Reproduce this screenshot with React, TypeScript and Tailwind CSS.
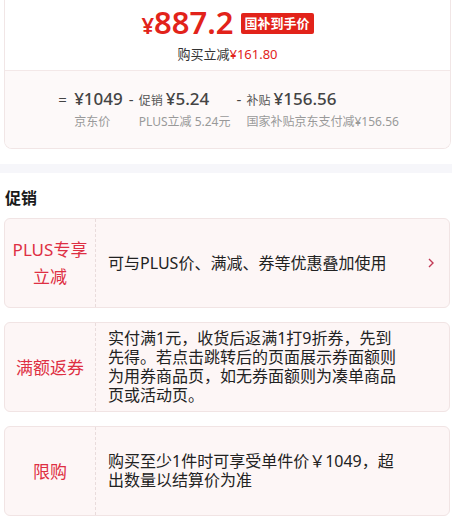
const font = "font-['Noto_Sans','Noto_Sans_CJK_SC',sans-serif]";

interface Promo {
  label: string[];
  text: string;
  arrow?: boolean;
}

const promos: Promo[] = [
  { label: ["PLUS专享", "立减"], text: "可与PLUS价、满减、券等优惠叠加使用", arrow: true },
  {
    label: ["满额返券"],
    text: "实付满1元，收货后返满1打9折券，先到先得。若点击跳转后的页面展示券面额则为用券商品页，如无券面额则为凑单商品页或活动页。",
  },
  { label: ["限购"], text: "购买至少1件时可享受单件价￥1049，超出数量以结算价为准" },
];

function Chevron() {
  return (
    <svg width="8" height="12" viewBox="0 0 8 12" className="shrink-0">
      <path d="M2 2 L6 6 L2 10" fill="none" stroke="#c23a55" strokeWidth="1.4" />
    </svg>
  );
}

function PriceBox() {
  return (
    <div className="ml-[4px] mr-[1px] border-x border-b border-[#f1e6e6] rounded-b-[8px] overflow-hidden">
      {/* top: final price */}
      <div className="h-[70px] flex flex-col items-center pt-[7px] bg-white">
        <div className="flex items-center">
          <span className="text-[#e2231a] font-semibold leading-none flex items-baseline">
            <span className="text-[22px]">¥</span>
            <span className="text-[31px]">887.2</span>
          </span>
          <span className="ml-[7px] mt-[2px] bg-[#e2231a] text-white text-[13px] font-bold leading-[21px] px-[4px] rounded-[2px]">
            国补到手价
          </span>
        </div>
        <div className="mt-[7px] text-[13px] leading-[18px] text-[#333]">
          购买立减<span className="text-[#e2231a]">¥161.80</span>
        </div>
      </div>

      {/* bottom: price breakdown */}
      <div className="h-[78px] border-t border-[#f3e8e8] bg-[#fdf9f9] flex justify-center pt-[17px] pl-[18px]">
        <div className="flex items-start gap-[16px]">
          <div className="flex flex-col">
            <div className="flex items-baseline text-[#444]">
              <span className="-ml-[16px] w-[16px] text-[15px]">=</span>
              <span className="text-[17px] font-medium leading-[22px]">¥1049</span>
            </div>
            <span className="mt-[3px] text-[12px] leading-[16px] text-[#999]">京东价</span>
          </div>
          <div className="flex flex-col">
            <div className="flex items-baseline text-[#444]">
              <span className="-ml-[10px] w-[10px] text-[15px]">-</span>
              <span className="text-[12px] text-[#555] mr-[3px]">促销</span>
              <span className="text-[17px] font-medium leading-[22px]">¥5.24</span>
            </div>
            <span className="mt-[3px] text-[12px] leading-[16px] text-[#999]">PLUS立减 5.24元</span>
          </div>
          <div className="flex flex-col">
            <div className="flex items-baseline text-[#444]">
              <span className="-ml-[10px] w-[10px] text-[15px]">-</span>
              <span className="text-[12px] text-[#555] mr-[3px]">补贴</span>
              <span className="text-[17px] font-medium leading-[22px]">¥156.56</span>
            </div>
            <span className="mt-[3px] text-[12px] leading-[16px] text-[#999]">国家补贴京东支付减¥156.56</span>
          </div>
        </div>
      </div>
    </div>
  );
}

export default function App() {
  return (
    <div className={`${font} w-[452px] h-[523px] bg-white overflow-hidden`}>
      <PriceBox />

      <div className="mt-[15px] h-[9px] bg-[#f6f6fa]" />

      <h2 className="mt-[15px] ml-[5px] text-[16px] font-bold leading-[20px] text-[#1a1a1a]">促销</h2>

      <div className="mt-[10px] ml-[4px] mr-[2px] flex flex-col gap-[14px]">
        {promos.map((p, i) => (
          <div
            key={i}
            className="h-[90px] flex bg-[#fdf6f6] border border-[#f1e4e4] rounded-[6px]"
          >
            <div className="w-[91px] shrink-0 flex flex-col items-center justify-center border-r border-dashed border-[#e9dcdc] text-[#de2f43] text-[17px] leading-[27px]">
              {p.label.map((l) => (
                <span key={l}>{l}</span>
              ))}
            </div>
            <div className="flex-1 flex items-center pl-[12px] pr-[12px]">
              <p className="w-[296px] text-[16px] leading-[19px] text-[#222]">{p.text}</p>
              {p.arrow && (
                <div className="ml-auto pr-[2px]">
                  <Chevron />
                </div>
              )}
            </div>
          </div>
        ))}
      </div>
    </div>
  );
}
